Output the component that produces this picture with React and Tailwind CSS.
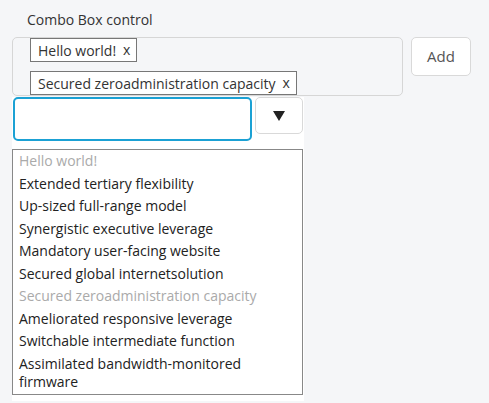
import React, { useState } from "react";

const options = [
  "Hello world!",
  "Extended tertiary flexibility",
  "Up-sized full-range model",
  "Synergistic executive leverage",
  "Mandatory user-facing website",
  "Secured global internetsolution",
  "Secured zeroadministration capacity",
  "Ameliorated responsive leverage",
  "Switchable intermediate function",
  "Assimilated bandwidth-monitored firmware",
];

const ComboBox = () => {
  const [selected, setSelected] = useState([
    "Hello world!",
    "Secured zeroadministration capacity",
  ]);
  const [text, setText] = useState("");

  const removeTag = (tag) => setSelected(selected.filter((s) => s !== tag));

  return (
    <div className="min-h-screen bg-[#f5f6f8] pt-[11px] pl-[12px] font-['Open_Sans',sans-serif] text-[14px] text-[#222]">
      {/* Label */}
      <div className="pl-[15px] h-[26px] leading-[18px] text-[#333]">
        Combo Box control
      </div>

      {/* Tags + Add */}
      <div className="flex items-start gap-[8px]">
        <div className="w-[391px] flex flex-col items-start gap-[9px] pl-[17px] border border-[#d6d6d6] rounded-[5px]">
          {selected.map((tag) => (
            <div
              key={tag}
              className="h-[24px] flex items-center pl-[7px] pr-[6px] bg-white border border-[#777] text-[#333]"
            >
              {tag}
              <button
                onClick={() => removeTag(tag)}
                className="ml-[7px] text-[#333] leading-none"
              >
                x
              </button>
            </div>
          ))}
        </div>
        <button className="w-[60px] h-[39px] bg-white border border-[#d9d9d9] rounded-[5px] text-[15px] text-[#555]">
          Add
        </button>
      </div>

      {/* Input + list */}
      <div className="w-[292px] bg-white pb-[6px] mt-[1px]">
        <div className="flex items-start gap-[3px]">
          <input
            value={text}
            onChange={(e) => setText(e.target.value)}
            className="ml-[1px] w-[239px] h-[44px] border-2 border-[#1ba1d4] rounded-[5px] outline-none px-2"
          />
          <button className="w-[48px] h-[37px] border border-[#d9d9d9] rounded-[5px] bg-white flex items-center justify-center">
            <svg width="12" height="10" viewBox="0 0 12 10">
              <path d="M0 0 H12 L6 10 Z" fill="#222" />
            </svg>
          </button>
        </div>
        <ul className="mt-[8px] w-[291px] border border-[#888]">
          {options.map((opt) => (
            <li
              key={opt}
              className={`px-[6px] py-[2px] leading-[18.5px] ${
                selected.includes(opt) ? "text-[#aaa]" : "text-[#222]"
              }`}
            >
              {opt}
            </li>
          ))}
        </ul>
      </div>
    </div>
  );
};

export default function App() {
  return <ComboBox />;
}
